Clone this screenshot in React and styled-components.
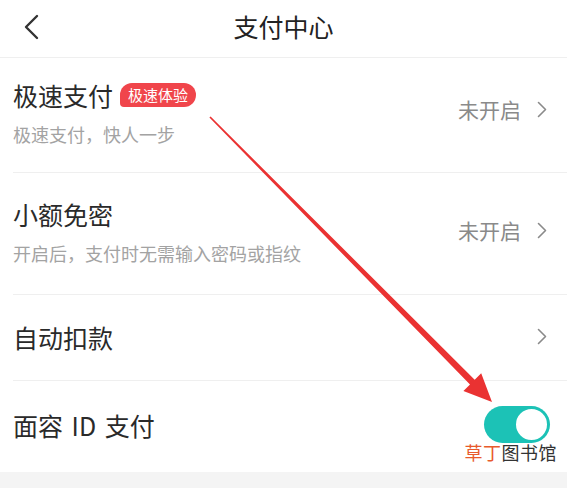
import React from "react";
import styled, { createGlobalStyle } from "styled-components";

const GlobalStyle = createGlobalStyle`
  html, body { margin: 0; padding: 0; background: #fff; }
  body {
    font-family: "Noto Sans CJK SC", "Noto Sans", sans-serif;
    -webkit-font-smoothing: antialiased;
  }
`;

const Page = styled.div`
  position: relative;
  width: 567px;
  height: 488px;
  overflow: hidden;
  background: #f4f4f4;
  display: flex;
  flex-direction: column;
`;

const Header = styled.header`
  position: relative;
  height: 58px;
  flex: none;
  box-sizing: border-box;
  padding-bottom: 6px;
  display: flex;
  align-items: center;
  justify-content: center;
  background: #fff;
  border-bottom: 1px solid #efefef;
`;

const BackButton = styled.button`
  position: absolute;
  left: 18px;
  top: 12px;
  width: 26px;
  height: 30px;
  padding: 0;
  border: 0;
  background: none;
  display: flex;
  align-items: center;
  justify-content: center;
`;

const Title = styled.h1`
  margin: 0;
  font-size: 25px;
  line-height: 30px;
  font-weight: 400;
  color: #222;
`;

const List = styled.ul`
  list-style: none;
  margin: 0;
  padding: 0;
  background: #fff;
`;

const Item = styled.li`
  height: ${(p) => p.$h}px;
  margin-left: 13px;
  padding-right: 20px;
  padding-bottom: ${(p) => p.$lift || 0}px;
  box-sizing: border-box;
  display: flex;
  align-items: center;
  justify-content: space-between;
  border-bottom: ${(p) => (p.$last ? "none" : "1px solid #efefef")};
`;

const TextCol = styled.div`
  display: flex;
  flex-direction: column;
  padding-bottom: 5px;
`;

const TitleLine = styled.div`
  display: flex;
  align-items: center;
  gap: 7px;
  height: 30px;
`;

const ItemTitle = styled.span`
  font-size: 25px;
  line-height: 30px;
  color: #2a2a2a;
  word-spacing: ${(p) => (p.$wide ? "3px" : "0")};
`;

const Badge = styled.span`
  height: 24px;
  padding: 0 8px;
  border-radius: 12px 12px 12px 4px;
  background: #f0454b;
  color: #fff;
  font-size: 15px;
  line-height: 24px;
  display: inline-flex;
  align-items: center;
`;

const Sub = styled.span`
  margin-top: 13px;
  font-size: 18px;
  line-height: 22px;
  color: #a3a3a3;
`;

const Trail = styled.div`
  display: flex;
  align-items: center;
  gap: 16px;
  margin-bottom: ${(p) => p.$lift || 0}px;
  color: #8a8a8a;
  font-size: 21px;
  line-height: 28px;
`;

const Toggle = styled.div`
  width: 66px;
  height: 37px;
  margin-right: -3px;
  border-radius: 19px;
  background: #1cc2b6;
  display: flex;
  align-items: center;
  justify-content: flex-end;
  padding: 0 1px;
  box-sizing: border-box;
`;

const Knob = styled.div`
  width: 35px;
  height: 35px;
  border-radius: 50%;
  background: #fff;
  border: 2px solid #1cc2b6;
  box-sizing: border-box;
`;

const Mark = styled.div`
  position: absolute;
  right: 10px;
  top: 441px;
  font-size: 18px;
  line-height: 22px;
  color: #333;
  letter-spacing: 0.5px;
`;

const MarkAccent = styled.span`
  color: #e85a2c;
`;

const Overlay = styled.svg`
  position: absolute;
  left: 0;
  top: 0;
  pointer-events: none;
`;

const Chevron = () => (
  <svg width="10" height="17" viewBox="0 0 10 17" fill="none">
    <path d="M1.5 1.5 L8.5 8.5 L1.5 15.5" stroke="#8a8a8a" strokeWidth="1.6" strokeLinecap="round" strokeLinejoin="round" />
  </svg>
);

// Tapered pointer arrow drawn over the list
function Pointer() {
  const S = [210, 117];
  const T = [492, 402];
  const dx = T[0] - S[0];
  const dy = T[1] - S[1];
  const len = Math.hypot(dx, dy);
  const u = [dx / len, dy / len];
  const n = [-u[1], u[0]];
  const headLen = 28;
  const headHalf = 12.5;
  const B = [T[0] - u[0] * headLen, T[1] - u[1] * headLen];
  const w0 = 0.8;
  const w1 = 3.3;
  const pt = (p) => `${p[0].toFixed(1)},${p[1].toFixed(1)}`;
  const add = (p, v, k) => [p[0] + v[0] * k, p[1] + v[1] * k];
  const points = [
    add(S, n, w0),
    add(B, n, w1),
    add(B, n, headHalf),
    T,
    add(B, n, -headHalf),
    add(B, n, -w1),
    add(S, n, -w0),
  ]
    .map(pt)
    .join(" ");
  return (
    <Overlay width="567" height="488" viewBox="0 0 567 488">
      <polygon points={points} fill="#ea3232" />
    </Overlay>
  );
}

export default function App() {
  return (
    <>
      <GlobalStyle />
      <Page>
        <Header>
          <BackButton aria-label="返回">
            <svg width="20" height="26" viewBox="0 0 20 26" fill="none">
              <path d="M16 2 L5 13 L16 24" stroke="#333" strokeWidth="2.4" strokeLinecap="round" strokeLinejoin="round" />
            </svg>
          </BackButton>
          <Title>支付中心</Title>
        </Header>
        <List>
          <Item $h={115}>
            <TextCol>
              <TitleLine>
                <ItemTitle>极速支付</ItemTitle>
                <Badge>极速体验</Badge>
              </TitleLine>
              <Sub>极速支付，快人一步</Sub>
            </TextCol>
            <Trail $lift={12}>
              未开启
              <Chevron />
            </Trail>
          </Item>
          <Item $h={122}>
            <TextCol>
              <TitleLine>
                <ItemTitle>小额免密</ItemTitle>
              </TitleLine>
              <Sub>开启后，支付时无需输入密码或指纹</Sub>
            </TextCol>
            <Trail $lift={7}>
              未开启
              <Chevron />
            </Trail>
          </Item>
          <Item $h={86} $lift={2}>
            <ItemTitle>自动扣款</ItemTitle>
            <Trail>
              <Chevron />
            </Trail>
          </Item>
          <Item $h={91} $lift={4} $last>
            <ItemTitle $wide>面容 ID 支付</ItemTitle>
            <Toggle>
              <Knob />
            </Toggle>
          </Item>
        </List>
        <Pointer />
        <Mark>
          <MarkAccent>草丁</MarkAccent>图书馆
        </Mark>
      </Page>
    </>
  );
}
